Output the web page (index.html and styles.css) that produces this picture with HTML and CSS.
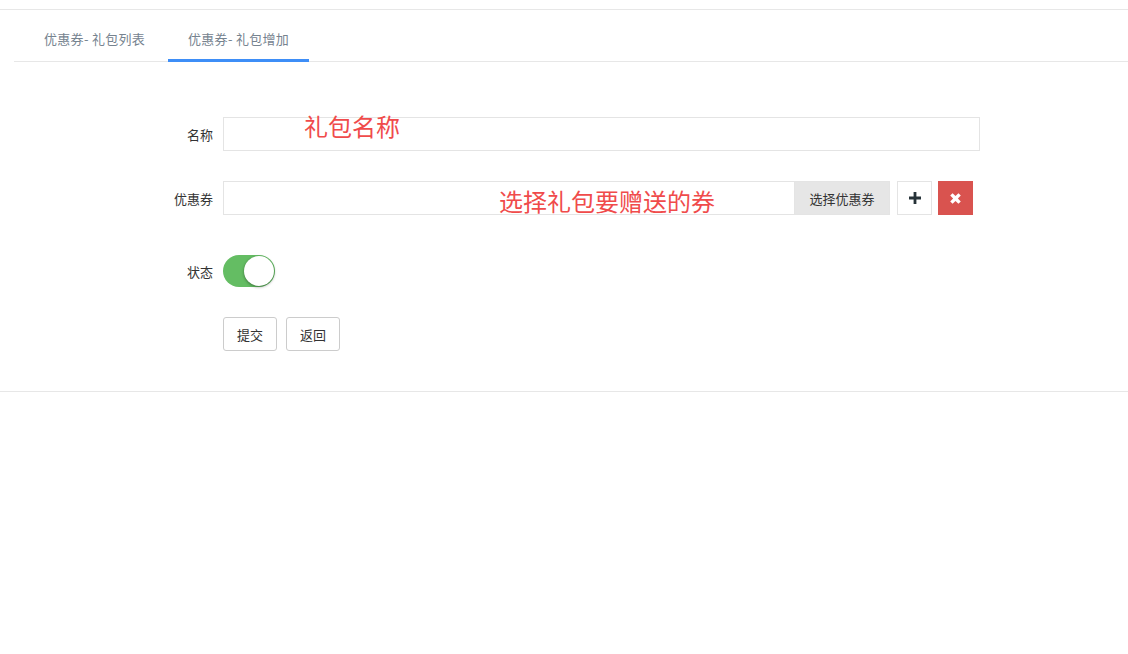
FILE: index.html
```html
<!DOCTYPE html>
<html lang="zh-CN">
<head>
<meta charset="utf-8">
<title>优惠券- 礼包增加</title>
<link rel="stylesheet" href="styles.css">
</head>
<body>
<div class="topbar"></div>
<div class="panel">
  <ul class="tabs">
    <li class="tab"><span>优惠券- 礼包列表</span></li>
    <li class="tab active"><span>优惠券- 礼包增加</span></li>
  </ul>
  <form class="form">
    <div class="row">
      <label class="label">名称</label>
      <div class="field">
        <input class="input input-full" type="text">
        <span class="note note-name">礼包名称</span>
      </div>
    </div>
    <div class="row row-coupon">
      <label class="label">优惠券</label>
      <div class="field group">
        <input class="input input-coupon" type="text">
        <span class="addon">选择优惠券</span>
        <button type="button" class="icon-btn plus" aria-label="添加">
          <svg width="12" height="12" viewBox="0 0 12 12"><path d="M4.6 0h2.8v4.6H12v2.8H7.4V12H4.6V7.4H0V4.6h4.6z" fill="#263238"/></svg>
        </button>
        <button type="button" class="icon-btn remove" aria-label="删除">
          <svg width="11" height="11" viewBox="0 0 11 11"><path d="M2.6 0.2L5.5 3.1 8.4 0.2 10.8 2.6 7.9 5.5 10.8 8.4 8.4 10.8 5.5 7.9 2.6 10.8 0.2 8.4 3.1 5.5 0.2 2.6z" fill="#fff"/></svg>
        </button>
        <span class="note note-coupon">选择礼包要赠送的券</span>
      </div>
    </div>
    <div class="row row-status">
      <label class="label">状态</label>
      <div class="field">
        <span class="switch"><span class="knob"></span></span>
      </div>
    </div>
    <div class="row row-actions">
      <span class="label"></span>
      <div class="field actions">
        <button type="button" class="btn">提交</button>
        <button type="button" class="btn">返回</button>
      </div>
    </div>
  </form>
</div>
</body>
</html>
```

FILE: styles.css
```css
* { box-sizing: border-box; }
html, body { margin: 0; padding: 0; background: #fff; }
body {
  font-family: "Noto Sans CJK SC", "Liberation Sans", sans-serif;
  font-size: 13px;
  color: #333;
}
.topbar {
  height: 10px;
  border-bottom: 1px solid #e7e7e7;
}
.panel {
  border-bottom: 1px solid #e7e7e7;
  padding-bottom: 40px;
}
.tabs {
  list-style: none;
  margin: 0 0 0 14px;
  padding: 0 0 0 10px;
  display: flex;
  border-bottom: 1px solid #e7e7e7;
  height: 52px;
}
.tab {
  width: 141px;
  height: 52px;
  margin-bottom: -1px;
  margin-right: 3px;
  padding: 19px 0 0 20px;
  line-height: 20px;
  color: #76838f;
  border-bottom: 3px solid transparent;
  white-space: nowrap;
  letter-spacing: 0.3px;
}
.tab.active {
  border-bottom-color: #3e8ef7;
}
.form {
  margin-top: 55px;
  display: flex;
  flex-direction: column;
}
.row {
  display: grid;
  grid-template-columns: 213px auto;
  column-gap: 10px;
  align-items: center;
}
.row + .row { margin-top: 30px; }
.row-status { margin-top: 40px !important; }
.label {
  text-align: right;
  color: #333;
  line-height: 20px;
  padding-top: 1px;
}
.field {
  position: relative;
  display: flex;
  align-items: center;
}
.input {
  height: 34px;
  border: 1px solid #e4e4e4;
  border-radius: 0;
  padding: 6px 12px;
  font: inherit;
  outline: none;
  background: #fff;
}
.input-full { width: 757px; }
.input-coupon { width: 572px; }
.addon {
  height: 34px;
  width: 95px;
  background: #e6e6e6;
  border: 1px solid #e4e4e4;
  border-left: 0;
  display: flex;
  align-items: center;
  justify-content: center;
  color: #333;
}
.icon-btn {
  height: 34px;
  width: 35px;
  border: 1px solid #e4e4e4;
  background: #fff;
  padding: 0;
  display: flex;
  align-items: center;
  justify-content: center;
}
.icon-btn.plus { margin-left: 7px; }
.icon-btn.remove {
  margin-left: 6px;
  background: #d9534f;
  border-color: #d9534f;
}
.note {
  position: absolute;
  color: #f04b4b;
  font-size: 24px;
  line-height: 28px;
  white-space: nowrap;
  pointer-events: none;
}
.note-name { left: 81px; top: -5px; }
.note-coupon { left: 276px; top: 6px; }
.switch {
  position: relative;
  width: 52px;
  height: 32px;
  border-radius: 16px;
  background: #64bd63;
  display: inline-block;
}
.knob {
  position: absolute;
  right: 1px;
  top: 1px;
  width: 30px;
  height: 30px;
  border-radius: 50%;
  background: #fff;
  box-shadow: 0 1px 3px rgba(0,0,0,0.4);
}
.actions { gap: 9px; }
.btn {
  height: 34px;
  width: 54px;
  border: 1px solid #ccc;
  border-radius: 3px;
  background: #fff;
  color: #333;
  font: inherit;
  padding: 0;
}
```
